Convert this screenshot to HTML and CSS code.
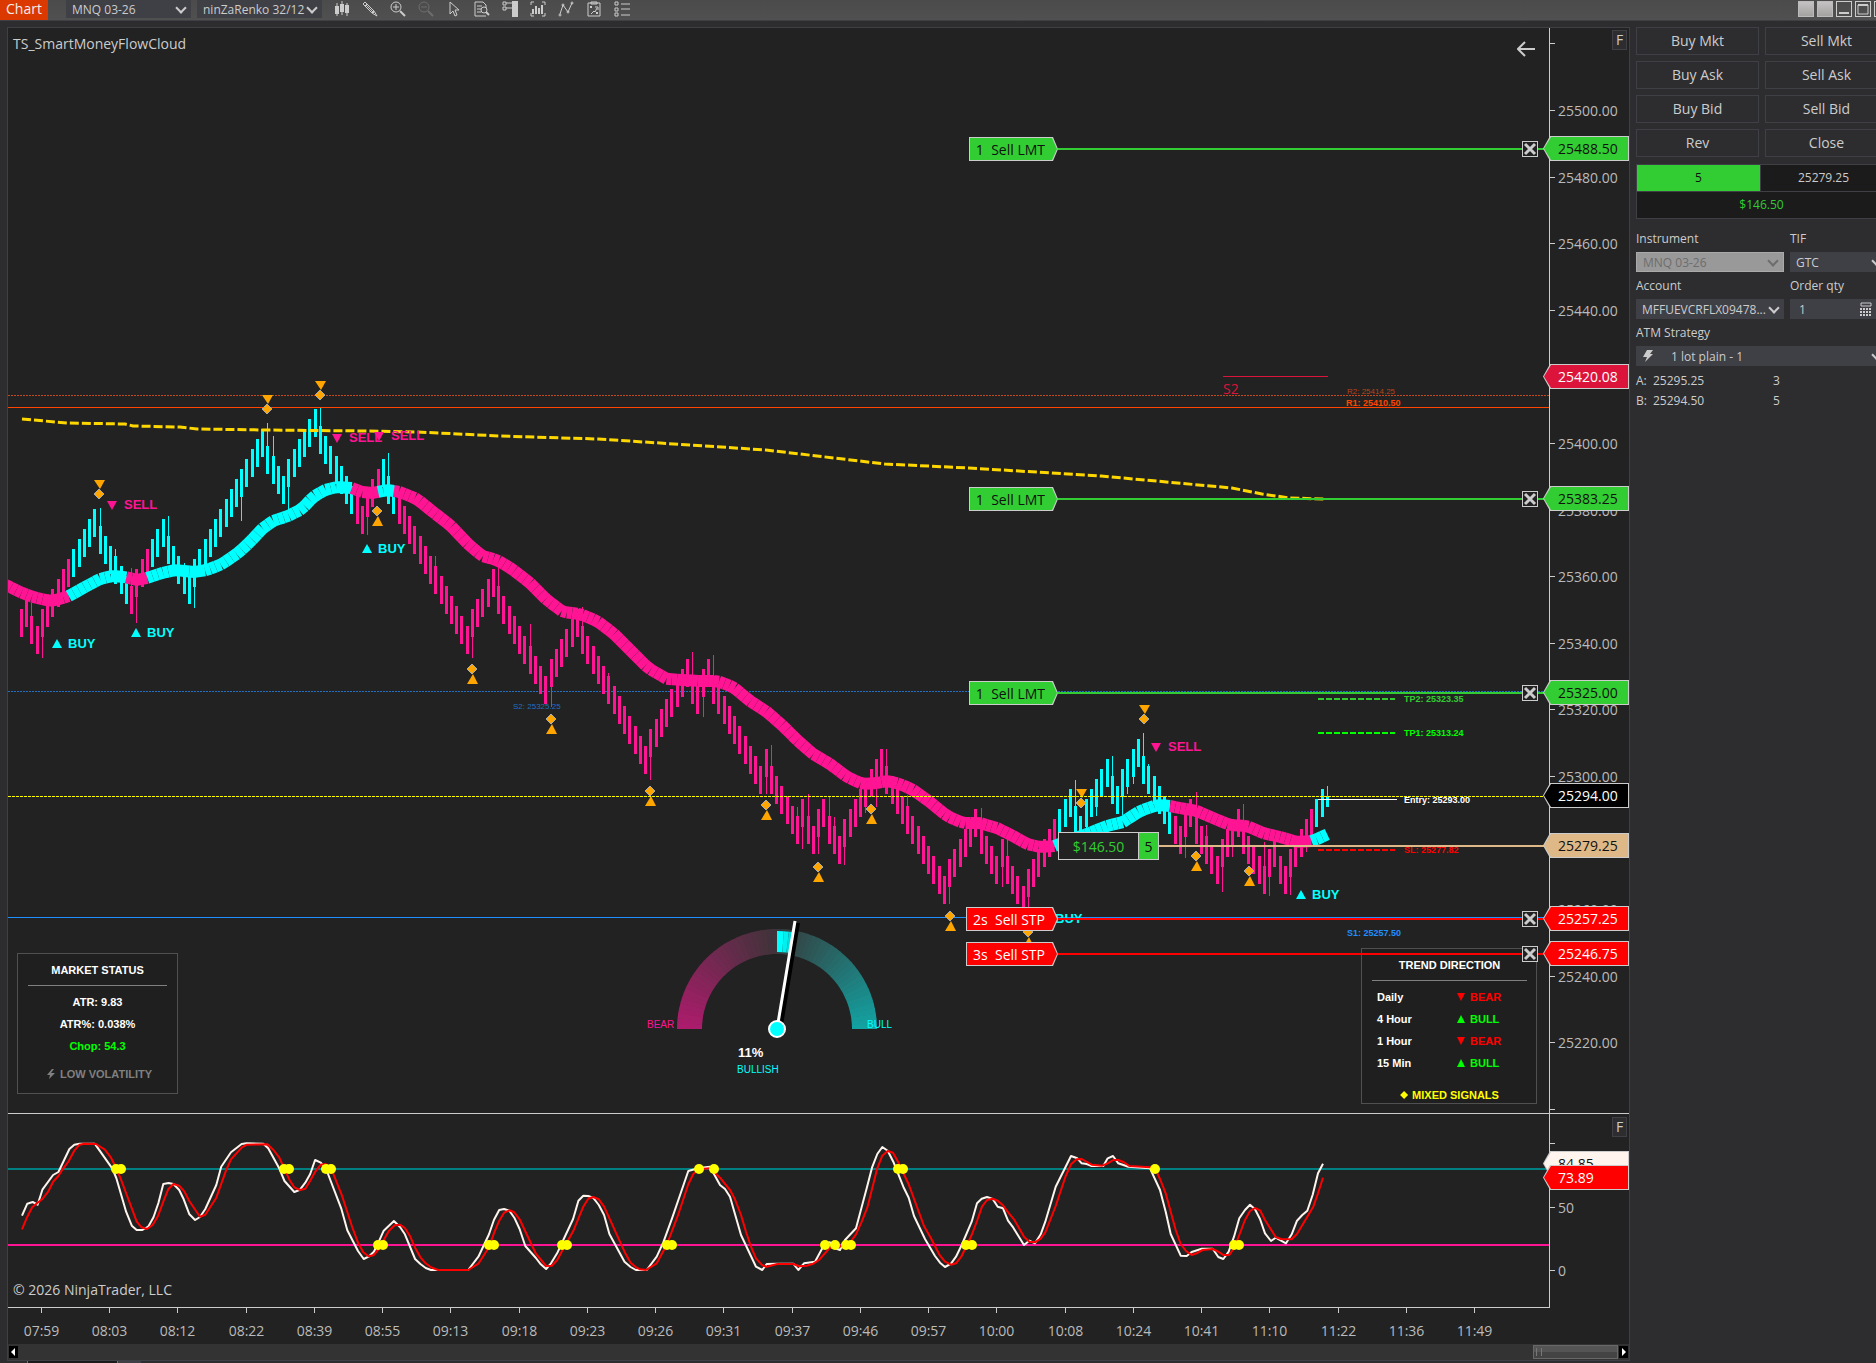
FILE: index.html
```html
<!DOCTYPE html>
<html lang="en">
<head>
  <meta charset="UTF-8">
  <meta name="viewport" content="width=device-width, initial-scale=1.0">
  <title>Chart - MNQ 03-26</title>
  <link rel="stylesheet" href="styles.css">
</head>
<body>
  <header class="toolbar">
    <h1 class="title">Chart</h1>
    <span class="select select-instrument">
      <select aria-label="Instrument"><option>MNQ 03-26</option></select>
    </span>
    <span class="select select-interval">
      <select aria-label="Interval"><option>ninZaRenko 32/12</option></select>
    </span>
    <nav class="tools">
      <button aria-label="Chart style"><svg viewBox="0 0 16 16"><path d="M3 2v13M8 0v14M13 2v13"/><path d="M1 5h4v8H1zM6 3h4v8H6zM11 4h4v8h-4z" class="solid"/></svg></button>
      <button aria-label="Drawing tools"><svg viewBox="0 0 16 16"><path d="M1 3l2-2 9 9 3 5-5-3zM3 5l2-2M4 4l8 8M10 12l2-2"/></svg></button>
      <button aria-label="Zoom in"><svg viewBox="0 0 16 16"><circle cx="6" cy="6" r="5"/><path d="M6 3v6M3 6h6"/><path d="M10 10l5 5" stroke-width="2"/></svg></button>
      <button aria-label="Zoom out" disabled><svg viewBox="0 0 16 16"><circle cx="6" cy="6" r="5"/><path d="M3 6h6"/><path d="M10 10l5 5" stroke-width="2"/></svg></button>
      <button aria-label="Cursor"><svg viewBox="0 0 16 16"><path d="M4 1v12l3-3 2 5 2-1-2-5h4z"/></svg></button>
      <button aria-label="Data box"><svg viewBox="0 0 16 16"><path d="M12 7V4l-3-3H1v14h11M3 5h5M3 8h4M3 11h4"/><circle cx="10" cy="9" r="3"/><path d="M12 11l3 3" stroke-width="2"/></svg></button>
      <button aria-label="Chart trader"><svg viewBox="0 0 16 16"><path d="M1 1h3v3H1zM1 6h3v3H1zM4 2h6M4 7h6" /><path d="M10 0h6v16h-6z" class="solid"/></svg></button>
      <button aria-label="Data series"><svg viewBox="0 0 16 16"><path d="M1 4V1h3M12 1h3v3M15 12v3h-3M4 15H1v-3"/><path d="M3 8v5M6 5v8M9 7v6M12 4v9" stroke-width="2"/></svg></button>
      <button aria-label="Indicators"><svg viewBox="0 0 16 16"><path d="M2 13L5 4l5 7 4-9"/><circle cx="2" cy="14" r="1"/><circle cx="5" cy="4" r="1"/><circle cx="10" cy="11" r="1"/><circle cx="14" cy="2" r="1"/></svg></button>
      <button aria-label="Strategies"><svg viewBox="0 0 16 16"><path d="M2 2h12v13H2zM5 1h6v2H5zM4 5l2 2M6 5L4 7M5 13l3-3 1 1 2-4M9 6h3v3M10 11l2 2M12 11l-2 2"/></svg></button>
      <button aria-label="Properties"><svg viewBox="0 0 16 16"><path d="M1 1h3v3H1zM1 7h3v3H1zM1 12h3v3H1zM7 3h9M7 8h9M7 14h9"/></svg></button>
    </nav>
    <div class="window-controls">
      <button class="swatch" aria-label="Instrument link"></button>
      <button class="swatch" aria-label="Interval link"></button>
      <button aria-label="Minimize"><svg viewBox="0 0 14 14"><path d="M2 11h10" stroke-width="2"/></svg></button>
      <button aria-label="Maximize"><svg viewBox="0 0 14 14"><path d="M2 3h10v9H2z"/><path d="M2 3h10" stroke-width="2"/></svg></button>
      <button aria-label="Close"></button>
    </div>
  </header>

  <main class="workspace">
    <section class="chart">
      <div class="plot price-plot">
        <svg class="canvas" id="priceCanvas"></svg>
        <p class="indicator-name">TS_SmartMoneyFlowCloud</p>
        <button class="back" aria-label="Return to latest bar"><svg viewBox="0 0 18 16"><path d="M8 1L1 8l7 7M1 8h17"/></svg></button>

        <section class="info market">
          <h2>MARKET STATUS</h2>
          <p>ATR: 9.83</p>
          <p>ATR%: 0.038%</p>
          <p class="chop">Chop: 54.3</p>
          <p class="volatility"><svg viewBox="0 0 8 10"><path d="M5 0L0 6h3L2 10l6-6H4l3-4z"/></svg> LOW VOLATILITY</p>
        </section>

        <section class="info trend">
          <h2>TREND DIRECTION</h2>
          <table>
            <tr><th>Daily</th><td class="bear">BEAR</td></tr>
            <tr><th>4 Hour</th><td class="bull">BULL</td></tr>
            <tr><th>1 Hour</th><td class="bear">BEAR</td></tr>
            <tr><th>15 Min</th><td class="bull">BULL</td></tr>
          </table>
          <p class="mixed">MIXED SIGNALS</p>
        </section>

        <div id="orders"></div>
      </div>

      <div class="axis price-axis" id="priceAxis">
        <button class="fixed-scale">F</button>
      </div>

      <div class="plot stoch-plot">
        <svg class="canvas" id="stochCanvas"></svg>
        <p class="copyright">© 2026 NinjaTrader, LLC</p>
      </div>
      <div class="axis stoch-axis" id="stochAxis">
        <button class="fixed-scale">F</button>
      </div>

      <div class="time-axis"><svg class="canvas" id="timeAxis"></svg></div>

      <div class="scrollbar">
        <button aria-label="Scroll left"><svg viewBox="0 0 7 12"><path d="M5 2v8L1 6z"/></svg></button>
        <div class="thumb"></div>
        <button aria-label="Scroll right"><svg viewBox="0 0 7 12"><path d="M2 2v8l4-4z"/></svg></button>
      </div>
    </section>

    <aside class="trader">
      <form class="trader-form">
        <div class="order-buttons">
          <button type="button">Buy Mkt</button>
          <button type="button">Sell Mkt</button>
          <button type="button">Buy Ask</button>
          <button type="button">Sell Ask</button>
          <button type="button">Buy Bid</button>
          <button type="button">Sell Bid</button>
          <button type="button">Rev</button>
          <button type="button">Close</button>
        </div>
        <div class="position">
          <span class="qty">5</span>
          <span>25279.25</span>
          <span class="pnl">$146.50</span>
        </div>
        <div class="fields">
          <label for="instrument">Instrument</label>
          <label for="tif">TIF</label>
          <span class="select disabled"><select id="instrument" disabled><option>MNQ 03-26</option></select></span>
          <span class="select"><select id="tif"><option>GTC</option></select></span>
          <label for="account">Account</label>
          <label for="qty">Order qty</label>
          <span class="select"><select id="account"><option>MFFUEVCRFLX09478...</option></select></span>
          <span class="qty-box">
            <input id="qty" type="text" value="1">
            <svg viewBox="0 0 12 14"><path d="M1 1h10v3H1z" class="frame"/><path d="M0 6h2v2H0zM3 6h2v2H3zM6 6h2v2H6zM9 6h2v2H9zM0 9h2v2H0zM3 9h2v2H3zM6 9h2v2H6zM9 9h2v2H9zM0 12h2v2H0zM3 12h2v2H3zM6 12h2v2H6zM9 12h2v2H9z"/></svg>
          </span>
          <label class="wide" for="atm">ATM Strategy</label>
          <span class="select wide atm">
            <svg viewBox="0 0 10 12"><path d="M4 0h6L7 4h3L2 12l2-5H0z"/></svg>
            <select id="atm"><option>1 lot plain - 1</option></select>
          </span>
        </div>
        <dl class="quotes">
          <dt>A:</dt><dd>25295.25</dd><dd>3</dd>
          <dt>B:</dt><dd>25294.50</dd><dd>5</dd>
        </dl>
      </form>
    </aside>
  </main>
  <footer class="tabs"><span></span><span></span></footer>

  <script src="chart.js"></script>
</body>
</html>
```
FILE: styles.css
```css
* {
  box-sizing: border-box;
}
body {
  margin: 0;
  min-height: 100vh;
  display: flex;
  flex-direction: column;
  background: #2d2d30;
  color: #ccc;
  font-family: "Open Sans", "Noto Sans", sans-serif;
  font-size: 12px;
  overflow-x: hidden;
}
h1, h2, p, dl, dd {
  margin: 0;
}
button, select, input {
  font: inherit;
  color: inherit;
  margin: 0;
  padding: 0;
  border: none;
  border-radius: 0;
  background: none;
}
button {
  cursor: pointer;
}
svg {
  display: block;
}

/* toolbar */
.toolbar {
  display: flex;
  align-items: flex-start;
  height: 21px;
  background: linear-gradient(#4b4b4b, #505050);
  border-bottom: 1px solid #3f3f46;
}
.title {
  width: 48px;
  height: 20px;
  background: #dc3900;
  color: #eee;
  font-size: 14px;
  font-weight: normal;
  line-height: 18px;
  text-align: center;
}
.select {
  position: relative;
  display: flex;
  align-items: center;
  height: 20px;
  background: #3f3f46;
}
.select select {
  appearance: none;
  flex: 1;
  min-width: 0;
  height: 100%;
  padding-left: 6px;
  outline: none;
}
.select::after {
  content: "";
  position: absolute;
  right: 6px;
  top: 5px;
  width: 6px;
  height: 6px;
  border: solid #ccc;
  border-width: 0 2px 2px 0;
  transform: rotate(45deg);
  pointer-events: none;
}
.toolbar .select {
  height: 18px;
}
.toolbar .select::after {
  top: 4px;
}
.select-instrument {
  width: 125px;
  margin-left: 18px;
}
.select-interval {
  width: 125px;
  margin-left: 6px;
}
.tools {
  display: flex;
  gap: 12px;
  margin-left: 12px;
}
.tools svg {
  width: 16px;
  height: 16px;
  margin-top: 1px;
  fill: none;
  stroke: #ccc;
}
.tools svg .solid {
  fill: #ccc;
  stroke: none;
}
.tools button:disabled {
  opacity: 0.25;
}
.window-controls {
  display: flex;
  gap: 3px;
  width: 78px;
  margin-left: auto;
  margin-top: 1px;
  overflow: hidden;
}
.window-controls button {
  flex: 0 0 16px;
  height: 16px;
  border: 1px solid #ccc;
}
.window-controls svg {
  fill: none;
  stroke: #ccc;
}
.window-controls .swatch {
  background: linear-gradient(#c4c2c2, #a4a1a1);
  border-color: #bbb;
}

/* chart area */
.workspace {
  flex: 1;
  display: grid;
  grid-template-columns: minmax(0, 1fr) 246px;
  padding-top: 6px;
}
.chart {
  display: grid;
  grid-template-columns: minmax(0, 1fr) 80px;
  grid-template-rows: minmax(1085px, 1fr) 194px 37px 16px;
  margin-left: 7px;
  border: 1px solid #3f3f46;
  background: #222;
}
.plot, .axis, .time-axis {
  position: relative;
}
.plot {
  overflow: hidden;
}
.canvas {
  position: absolute;
  width: 100%;
  height: 100%;
}
.stoch-plot, .stoch-axis {
  border-top: 1px solid #ccc;
}
.axis {
  border-left: 1px solid #ccc;
  font-size: 14px;
}
.indicator-name, .copyright {
  position: absolute;
  left: 5px;
  font-size: 14px;
  line-height: 20px;
}
.indicator-name {
  top: 6px;
}
.copyright {
  bottom: 7px;
}
.back {
  position: absolute;
  top: 13px;
  right: 14px;
}
.back svg {
  width: 18px;
  height: 16px;
  fill: none;
  stroke: #ccc;
  stroke-width: 2;
}
.fixed-scale {
  position: absolute;
  top: 2px;
  right: 2px;
  width: 15px;
  height: 20px;
  border: 1px solid #3f3f46;
  background: #2d2d30;
  line-height: 18px;
}
.stoch-axis .fixed-scale {
  top: 3px;
}
.tick {
  position: absolute;
  left: 0;
  display: flex;
  align-items: center;
  gap: 3px;
  height: 20px;
  margin-top: -10px;
  color: #bbb;
}
.tick::before {
  content: "";
  width: 5px;
  height: 1px;
  background: #ccc;
}

/* price markers on the axis */
.marker {
  position: absolute;
  z-index: 3;
  left: -7px;
  right: 0;
  height: 25px;
  margin-top: -12px;
  padding-left: 15px;
  background: #ccc;
  clip-path: polygon(7px 0, 100% 0, 100% 100%, 7px 100%, 0 50%);
  line-height: 25px;
}
.marker::before, .tag::before {
  content: "";
  position: absolute;
  z-index: -1;
  inset: 1px;
  background: var(--fill);
  clip-path: inherit;
}
.green {
  --fill: #32cd32;
  color: #111;
}
.red {
  --fill: #f00;
  color: #fff;
}
.crimson {
  --fill: #dc143c;
  color: #fff;
}
.black {
  --fill: #000;
  color: #fff;
}
.tan {
  --fill: #deb887;
  color: #111;
}
.seashell {
  --fill: #fff5ee;
  color: #111;
}

/* working orders */
.order {
  position: absolute;
  z-index: 2;
  left: 958px;
  right: 0;
  display: flex;
  align-items: center;
  height: 26px;
  margin-top: -12px;
  font-size: 14px;
}
.order::after {
  content: "";
  width: 11px;
  height: 2px;
  background: var(--fill);
}
.tag {
  position: relative;
  z-index: 0;
  height: 24px;
  margin-left: auto;
  padding: 0 13px 0 7px;
  background: #ccc;
  clip-path: polygon(0 0, calc(100% - 5px) 0, 100% 50%, calc(100% - 5px) 100%, 0 100%);
  line-height: 25px;
  white-space: pre;
}
.tag-slot {
  display: flex;
  width: 92px;
}
.line {
  flex: 1;
  height: 2px;
  background: var(--fill);
}
.cancel {
  width: 16px;
  height: 16px;
  border: 1px solid #ccc;
  background: #222;
}
.cancel svg {
  stroke: #ccc;
  stroke-width: 3;
}
.open-position {
  left: 1050px;
  height: 28px;
  margin-top: -13px;
}
.open-position .profit, .open-position .size {
  height: 28px;
  border: 1px solid #ccc;
  line-height: 27px;
  text-align: center;
}
.open-position .profit {
  width: 81px;
  background: #222;
  color: #32cd32;
}
.open-position .size {
  width: 21px;
  margin-left: -1px;
  background: #32cd32;
}

/* info panels */
.info {
  position: absolute;
  border: 1px solid #505050;
  background: #1f1f1f;
  color: #fff;
  font: bold 11px/22px "Liberation Sans", Arial, sans-serif;
  text-align: center;
}
.info h2 {
  padding-bottom: 7px;
  border-bottom: 1px solid #808080;
  font-size: 11px;
  line-height: 16px;
}
.market {
  left: 9px;
  bottom: 19px;
  width: 161px;
  height: 141px;
  padding: 8px 10px;
}
.market h2 {
  margin-bottom: 5px;
}
.chop {
  color: #0f0;
}
.volatility {
  display: flex;
  justify-content: center;
  align-items: center;
  gap: 5px;
  margin-top: 6px;
  padding-left: 4px;
  color: #808080;
}
.volatility svg {
  width: 8px;
  height: 10px;
  fill: #808080;
}
.trend {
  right: 12px;
  bottom: 9px;
  width: 176px;
  height: 156px;
  padding: 8px 9px 0 10px;
}
.trend table {
  width: 100%;
  margin-top: 5px;
  border-collapse: collapse;
  text-align: left;
}
.trend th, .trend td {
  height: 22px;
  padding: 0 0 0 5px;
}
.trend td {
  width: 75px;
}
.bear::before, .bull::before {
  content: "";
  display: inline-block;
  width: 8px;
  height: 8px;
  margin-right: 5px;
  background: currentColor;
}
.bear {
  color: #f00;
}
.bear::before {
  clip-path: polygon(0 0, 100% 0, 50% 100%);
}
.bull {
  color: #0f0;
}
.bull::before {
  clip-path: polygon(50% 0, 100% 100%, 0 100%);
}
.mixed {
  margin-top: 10px;
  color: #ff0;
}
.mixed::before {
  content: "";
  display: inline-block;
  width: 8px;
  height: 8px;
  margin-right: 4px;
  background: currentColor;
  clip-path: polygon(50% 0, 100% 50%, 50% 100%, 0 50%);
}

/* text drawn in the chart */
.canvas text {
  font-family: "Liberation Sans", Arial, sans-serif;
  font-size: 9px;
  font-weight: bold;
}
.canvas .signal, .canvas .percent {
  font-size: 13px;
}
.canvas .plain {
  font-size: 10px;
  font-weight: normal;
}
.canvas .level-small {
  font-size: 8px;
  font-weight: normal;
}
.canvas .level-big, #timeAxis text {
  font-family: "Open Sans", "Noto Sans", sans-serif;
  font-size: 14px;
  font-weight: normal;
}
#timeAxis text {
  text-anchor: middle;
}

.scrollbar {
  grid-column: 1 / -1;
  display: flex;
  align-items: center;
  padding: 0 1px;
  background: #333;
}
.time-axis {
  grid-column: 1 / -1;
}
.time-axis::before {
  content: "";
  position: absolute;
  left: 0;
  right: 79px;
  height: 1px;
  background: #ccc;
}
.scrollbar button {
  width: 9px;
  height: 12px;
  background: #000;
}
.scrollbar svg {
  width: 7px;
  height: 12px;
  margin: auto;
  fill: #fff;
}
.thumb {
  width: 85px;
  height: 14px;
  margin-left: auto;
  margin-right: 1px;
  border: 1px solid #686868;
  background: linear-gradient(#555 50%, #444 50%);
}
.thumb::before {
  content: "";
  display: block;
  width: 4px;
  height: 8px;
  margin: 2px;
  border: solid #777;
  border-width: 0 1px;
}

/* chart trader */
.trader {
  padding-left: 6px;
  overflow: hidden;
}
.trader-form {
  width: 251px;
}
.order-buttons {
  display: grid;
  grid-template-columns: 123px 123px;
  gap: 6px;
}
.order-buttons button {
  height: 28px;
  border: 1px solid #3f3f46;
  font-size: 14px;
  line-height: 26px;
}
.position {
  display: grid;
  grid-template-columns: 123px 1fr;
  gap: 1px;
  margin-top: 7px;
  border: 1px solid #3f3f46;
  background: #3f3f46;
}
.position span {
  height: 26px;
  background: #1b1b1c;
  line-height: 26px;
  text-align: center;
}
.position .qty {
  background: #32cd32;
  color: #111;
}
.position .pnl {
  grid-column: 1 / -1;
  color: #32cd32;
}
.fields {
  display: grid;
  grid-template-columns: 148px 1fr;
  column-gap: 6px;
  margin-top: 6px;
}
.fields label {
  height: 27px;
  padding-top: 5px;
  line-height: 17px;
}
.fields .select {
  height: 20px;
}
.wide {
  grid-column: 1 / -1;
}
.fields .disabled {
  background: #999;
  border: 1px solid #aaa;
  color: #6d6d6d;
}
.disabled select:disabled {
  color: #6d6d6d;
  opacity: 1;
}
.fields .disabled::after {
  top: 4px;
  border-color: #6d6d6d;
}
.qty-box {
  display: flex;
  align-items: center;
  height: 20px;
  background: #3f3f46;
}
.qty-box input {
  width: 70px;
  padding-left: 9px;
  outline: none;
}
.qty-box svg {
  width: 12px;
  height: 14px;
  fill: #ccc;
}
.qty-box .frame {
  fill: none;
  stroke: #ccc;
}
.atm svg {
  width: 10px;
  height: 12px;
  margin-left: 7px;
  fill: #ccc;
}
.atm select {
  padding-left: 18px;
}
.quotes {
  display: grid;
  grid-template-columns: 17px 120px 1fr;
  margin-top: 5px;
  line-height: 20px;
}

.tabs {
  display: flex;
  height: 2px;
  padding-left: 27px;
}
.tabs span {
  width: 91px;
  background: #1b1b1c;
  border: solid #1c86ee;
  border-width: 0 1px;
}
.tabs span + span {
  width: 23px;
  border: none;
  background: #3f3f46;
}
```
FILE: chart.js
```js
const LEFT = 8;
const TOP = 28;
const FIRST_X = 21.5;
const PITCH = 5.244;
const CYAN = '#00ffff';
const PINK = '#ff1493';

function line(x1, y1, x2, y2, color, width = 1, dash = '') {
  return `<line x1="${x1}" y1="${y1}" x2="${x2}" y2="${y2}" stroke="${color}" stroke-width="${width}" stroke-dasharray="${dash}"/>`;
}

function text(x, y, label, color, cls = '') {
  return `<text x="${x}" y="${y}" fill="${color}" class="${cls}">${label}</text>`;
}

function priceY(price) {
  return 82 + (25500 - price) * 3.33;
}

// Cloud and bars share the trend colour of their index
const bullRanges = [[10, 20], [25, 63], [69, 71], [198, 219], [247, 249]];
function trendColor(i) {
  return bullRanges.some(([a, b]) => i >= a && i <= b) ? CYAN : PINK;
}

// Lengths of the alternating up / down renko runs, starting with an up run
const runs = [2, 2, 11, 7, 6, 5, 14, 4, 6, 9, 4, 16, 5, 10, 6, 13, 8, 2, 2, 10, 1, 6, 1, 2, 2, 3, 8,
  12, 6, 4, 1, 4, 9, 2, 5, 2, 4, 8, 2, 5, 4, 5, 2, 2, 7];

// Far end of the wick for the bars that have one
const wicks = {
  2: 603, 4: 658, 15: 508, 18: 549, 21: 568, 22: 623, 28: 516, 31: 563, 33: 608, 42: 521, 47: 423,
  48: 436, 51: 510, 57: 408, 66: 535, 70: 453, 79: 556, 86: 658, 91: 566, 97: 624, 101: 707, 107: 607,
  112: 673, 120: 780, 128: 652, 130: 717, 132: 655, 142: 794, 143: 745, 148: 807, 149: 849, 150: 794,
  152: 854, 154: 797, 155: 817, 157: 865, 161: 813, 163: 807, 165: 749, 169: 795, 177: 904, 183: 808,
  187: 887, 188: 839, 192: 907, 201: 780, 203: 840, 205: 816, 208: 756, 210: 815, 211: 794, 212: 784,
  214: 733, 215: 764, 222: 858, 224: 792, 226: 825, 229: 892, 231: 857, 233: 804, 237: 842, 238: 896,
  242: 895, 245: 852
};

function drawBars() {
  let out = '';
  let y = 619;
  let i = 0;
  runs.forEach((count, r) => {
    const step = r % 2 === 0 ? -10 : 10;
    for (let n = 0; n < count; n++) {
      y += n === 0 && r > 0 ? Math.sign(step) * 17 : step;
      const x = Math.round(FIRST_X + i * PITCH - 0.5);
      const color = trendColor(i);
      out += `<rect x="${x - 1}" y="${y}" width="3" height="28" fill="${color}"/>`;
      if (wicks[i]) {
        out += line(x + 0.5, y + 14, x + 0.5, wicks[i], color);
      }
      i++;
    }
  });
  return out + `<rect x="1326" y="796" width="3" height="11" fill="${CYAN}"/>` + line(1327.5, 786, 1327.5, 800, CYAN);
}

const cloud = [[8, 586], [20, 592], [33, 597], [50, 601], [60, 599], [69, 596], [83, 588], [100, 579],
  [112, 576], [125, 577], [137, 580], [147, 578], [162, 573], [175, 570], [194, 572], [207, 570],
  [222, 564], [238, 553], [250, 542], [263, 528], [273, 521], [288, 516], [302, 509], [313, 497],
  [325, 490], [337, 487], [352, 488], [362, 492], [373, 493], [387, 490], [400, 492], [417, 499],
  [433, 512], [450, 525], [467, 543], [482, 556], [497, 560], [512, 569], [530, 583], [547, 600],
  [563, 612], [580, 614], [597, 621], [613, 633], [633, 653], [648, 668], [667, 679], [683, 680],
  [700, 681], [717, 681], [733, 687], [750, 701], [767, 712], [783, 726], [797, 740], [813, 754],
  [830, 764], [847, 777], [863, 784], [877, 783], [888, 781], [900, 784], [913, 790], [930, 802],
  [947, 816], [963, 823], [980, 823], [997, 828], [1013, 836], [1027, 844], [1040, 847], [1055, 846],
  [1062, 843], [1087, 834], [1107, 826], [1123, 822], [1140, 811], [1157, 805], [1170, 806],
  [1180, 808], [1197, 811], [1213, 818], [1230, 825], [1247, 826], [1263, 833], [1280, 837],
  [1297, 842], [1313, 841], [1328, 834]];

function interpolate(points, x) {
  let k = 0;
  while (k < points.length - 2 && points[k + 1][0] < x) k++;
  const [x1, y1] = points[k];
  const [x2, y2] = points[k + 1];
  return y1 + (y2 - y1) * (x - x1) / (x2 - x1);
}

function drawCloud() {
  let out = '';
  for (let i = -2; i <= 249; i++) {
    const x2 = FIRST_X + i * PITCH;
    const x1 = x2 - PITCH;
    out += line(x1, interpolate(cloud, x1), x2, interpolate(cloud, x2), trendColor(i), 12);
  }
  return out;
}

function diamond(x, y) {
  return `<path d="M${x} ${y - 5}l5 5l-5 5l-5-5z" fill="orange" stroke="#aaa"/>`;
}

function topMarker(x, y) {
  return `<path d="M${x - 5} ${y - 14}h11l-5 9z" fill="orange"/>` + diamond(x, y);
}

function bottomMarker(x, y) {
  return `<path d="M${x - 5} ${y + 15}h11l-5-10z" fill="orange"/>` + diamond(x, y);
}

function buy(x, y) {
  return `<path d="M${x - 16} ${y}h10l-5-9z" fill="${CYAN}"/>` + text(x, y, 'BUY', CYAN, 'signal');
}

function sell(x, y) {
  return `<path d="M${x - 17} ${y - 8}h10l-5 9z" fill="${PINK}"/>` + text(x, y, 'SELL', PINK, 'signal');
}

function drawGauge(cx, cy) {
  const point = (r, deg) => {
    const a = deg * Math.PI / 180;
    return `${(cx - r * Math.cos(a)).toFixed(1)} ${(cy - r * Math.sin(a)).toFixed(1)}`;
  };
  const slice = (a, b, inner, outer, color) =>
    `<path d="M${point(outer, a)}L${point(outer, b)}L${point(inner, b)}L${point(inner, a)}z" fill="${color}"/>`;
  const mix = (a, b, t) => a.map((v, k) => Math.round(v + (b[k] - v) * t));
  let out = '';
  for (let deg = 0; deg < 180; deg += 3) {
    const rgb = deg < 90 ? mix([172, 28, 108], [60, 52, 55], deg / 90) : mix([55, 60, 60], [18, 165, 165], (deg - 90) / 90);
    out += slice(deg, Math.min(deg + 3.4, 180), 75, 100, `rgb(${rgb})`);
  }
  out += slice(90, 94, 77, 98, CYAN) + slice(94, 97, 77, 98, '#00f0f0') + slice(97, 100, 77, 98, '#00dcdc');
  out += line(cx + 3, cy + 2, cx + 21, cy - 106, '#000', 4);
  out += line(cx, cy, cx + 18, cy - 108, '#fff', 3);
  out += `<circle cx="${cx}" cy="${cy}" r="8" fill="${CYAN}" stroke="#fff" stroke-width="2"/>`;
  out += text(647, 1028, 'BEAR', PINK, 'plain') + text(867, 1028, 'BULL', CYAN, 'plain');
  out += text(738, 1057, '11%', '#fff', 'percent') + text(737, 1073, 'BULLISH', CYAN, 'plain');
  return out;
}

function drawPrice() {
  let out = '';
  out += line(0, 367.5, '100%', 367.5, '#c04a1c', 1, '2 1');
  out += line(0, 379.5, '100%', 379.5, '#ff4500');
  out += line(0, 663.5, '100%', 663.5, '#1f70c0', 1, '2 1');
  out += line(0, 889.5, '100%', 889.5, '#1e90ff');
  out += `<g transform="translate(${-LEFT} ${-TOP})">`;
  out += drawBars() + drawCloud();
  out += '<polyline points="22,419 67,423 125,424 133,426 180,427 197,429 267,430 367,431 417,432 500,436 598,439 690,445 766,450 885,464 969,468 1101,476 1232,488 1262,494 1290,498 1324,499" fill="none" stroke="#ffd700" stroke-width="3" stroke-dasharray="9 3"/>';
  [[267, 409], [320, 395], [99, 494], [1144, 719], [1081, 803]].forEach(([x, y]) => out += topMarker(x, y));
  [[377, 511], [472, 669], [551, 719], [650, 791], [766, 805], [818, 867], [871, 809], [950, 916],
    [1028, 932], [1196, 856], [1249, 871]].forEach(([x, y]) => out += bottomMarker(x, y));
  [[68, 648], [147, 637], [378, 553], [1312, 899], [1055, 923]].forEach(([x, y]) => out += buy(x, y));
  [[124, 509], [349, 442], [391, 440], [1168, 751]].forEach(([x, y]) => out += sell(x, y));
  out += text(513, 709, 'S2: 25325.25', '#1f70c0', 'level-small');
  out += line(1223, 376.5, 1328, 376.5, '#dc143c') + text(1223, 394, 'S2', '#dc143c', 'level-big');
  out += text(1347, 394, 'R2: 25414.25', '#b5451a', 'level-small') + text(1346, 406, 'R1: 25410.50', '#ff4500');
  out += text(1347, 936, 'S1: 25257.50', '#1e90ff');
  out += line(1318, 699, 1395, 699, '#32cd32', 2, '6 2') + text(1404, 702, 'TP2: 25323.35', '#32cd32');
  out += line(1318, 733, 1395, 733, '#0f0', 2, '6 2') + text(1404, 736, 'TP1: 25313.24', '#0f0');
  out += line(1318, 850, 1395, 850, '#f00', 2, '6 2') + text(1404, 853, 'SL: 25277.82', '#f00');
  out += drawGauge(777, 1029);
  out += '</g>';
  out += line(0, 768.5, '100%', 768.5, '#ffff00', 1, '3 1');
  out += `<g transform="translate(${-LEFT} ${-TOP})">`;
  out += line(1318, 799.5, 1397, 799.5, '#fff') + text(1404, 803, 'Entry: 25293.00', '#fff') + '</g>';
  document.getElementById('priceCanvas').innerHTML = out;
}

function drawOrders() {
  const cross = '<svg viewBox="0 0 14 14"><path d="M2 2l10 10M12 2L2 12"/></svg>';
  const orders = [
    ['1', 'Sell LMT', 25488.5, 'green'],
    ['1', 'Sell LMT', 25383.25, 'green'],
    ['1', 'Sell LMT', 25325, 'green'],
    ['2s', 'Sell STP', 25257.25, 'red'],
    ['3s', 'Sell STP', 25246.75, 'red']
  ];
  let out = '';
  orders.forEach(([qty, name, price, cls]) => {
    out += `<div class="order ${cls}" style="top: ${Math.floor(priceY(price))}px">
      <span class="tag-slot"><span class="tag">${qty}  ${name}</span></span>
      <span class="line"></span>
      <button class="cancel" aria-label="Cancel order">${cross}</button>
    </div>`;
  });
  out += `<div class="order open-position tan" style="top: ${Math.floor(priceY(25279.25))}px">
    <span class="profit">$146.50</span><span class="size">5</span><span class="line"></span>
  </div>`;
  document.getElementById('orders').innerHTML = out;
}

function drawAxes() {
  let out = '';
  for (let price = 25520; price >= 25200; price -= 20) {
    const label = price === 25520 || price === 25200 || price === 25420 ? '' : price.toFixed(2);
    out += `<span class="tick" style="top: ${Math.round(priceY(price))}px">${label}</span>`;
  }
  [[25488.5, 'green'], [25420.08, 'crimson'], [25383.25, 'green'], [25325, 'green'], [25294, 'black'],
    [25279.25, 'tan'], [25257.25, 'red'], [25246.75, 'red']].forEach(([price, cls]) => {
    out += `<span class="marker ${cls}" style="top: ${Math.floor(priceY(price))}px">${price.toFixed(2)}</span>`;
  });
  document.getElementById('priceAxis').insertAdjacentHTML('beforeend', out);

  out = '';
  [[100, ''], [50, '50'], [0, '0']].forEach(([value, label]) => {
    out += `<span class="tick" style="top: ${Math.round(156 - value * 1.27)}px">${label}</span>`;
  });
  out += '<span class="marker seashell" style="top: 49px">84.85</span>';
  out += '<span class="marker red" style="top: 63px">73.89</span>';
  document.getElementById('stochAxis').insertAdjacentHTML('beforeend', out);

  const times = ['07:59', '08:03', '08:12', '08:22', '08:39', '08:55', '09:13', '09:18', '09:23', '09:26', '09:31',
    '09:37', '09:46', '09:57', '10:00', '10:08', '10:24', '10:41', '11:10', '11:22', '11:36', '11:49'];
  out = '';
  times.forEach((time, i) => {
    const x = Math.round(33 + i * 68.24) + 0.5;
    out += line(x, 1, x, 6, '#ccc') + text(x, 29, time, '#bbb');
  });
  document.getElementById('timeAxis').innerHTML = out;
}

// Stochastic samples: [x origin, samples per pixel, "x,y ..."]
const fast = [
  [0, 2.45, '54,347 67,311 80,306 92,314 104,269 130,225 143,216 170,147 182,134 195,131 232,131 275,205 285,234 309,335 323,377 335,390 349,390 363,380 376,352 388,309 400,252 413,249 425,252 439,270 450,298 464,343 478,360 490,351 503,327 530,255 542,200 566,157 592,132 604,130 645,131 657,145 684,205 697,243 721,276 735,269 748,248 760,222 772,180 786,188 800,210 836,325 851,391 877,453 891,477 903,470 916,455 928,425 940,392 965,363 980,381 992,403 1017,477 1030,492 1043,504 1056,510 1147,510 1172,470 1198,403 1210,360 1223,330 1235,327 1248,332 1260,353 1273,387 1287,438 1313,474 1325,493 1338,507 1350,490 1365,460 1380,420 1404,357 1417,302 1429,287 1441,288 1453,293 1467,315 1480,345 1493,402 1530,485 1545,501 1558,510'],
  [640, 3, '0,510 20,510 50,470 70,427 97,353 145,213 177,204 210,200 240,255 255,267 270,290 303,405 348,500 367,510 380,492 410,491 460,491 475,510 492,490 525,485 555,430 570,427 585,445 600,450 615,420 648,385 680,265 696,203 712,162 727,141 743,152 760,185 790,260 806,293 822,348 855,417 885,468 900,488 915,501 933,491 948,470 965,435 995,365 1011,310 1025,296 1041,291 1058,297 1073,320 1089,325 1104,362 1120,383 1152,435 1168,422 1185,430 1202,403 1216,365 1247,260 1293,168 1312,175 1325,190 1340,192 1355,198 1390,198 1403,175 1419,168 1435,190 1465,200 1530,205'],
  [1130, 3, '60,205 90,270 107,335 122,402 152,467 170,468 185,456 215,446 248,446 265,471 280,477 296,455 312,410 328,355 345,330 360,314 375,328 390,357 405,400 423,423 437,413 468,430 485,403 501,362 517,345 532,332 548,284 564,220 579,191']
];
const slow = [
  [0, 2.45, '54,388 67,350 79,322 92,308 104,297 118,275 130,245 143,228 155,205 168,184 182,152 195,134 207,131 235,132 257,149 272,173 285,205 297,240 323,325 335,365 347,382 360,387 374,375 387,348 400,305 412,268 425,252 439,257 452,275 464,304 490,350 503,344 530,293 554,211 566,178 592,143 605,134 655,133 670,150 684,172 697,207 709,239 721,262 735,270 748,266 760,242 773,214 786,194 798,192 812,207 838,287 863,381 877,428 890,457 903,469 915,466 928,447 940,420 953,392 967,376 980,374 992,384 1004,407 1017,443 1030,472 1043,490 1056,502 1073,510 1147,510 1172,491 1198,442 1210,400 1223,362 1235,338 1248,331 1260,337 1273,358 1313,461 1338,498 1352,497 1365,481 1380,446 1404,394 1429,320 1441,296 1453,291 1467,298 1480,320 1530,455 1545,488 1560,503'],
  [640, 3, '0,508 18,510 50,490 80,435 115,343 145,253 160,222 177,208 210,205 240,233 270,270 285,298 303,345 318,395 333,440 348,475 367,496 380,500 412,492 460,492 478,499 500,497 520,491 537,480 570,443 600,440 632,425 648,403 664,368 682,323 712,205 727,167 743,153 759,158 774,185 806,253 852,378 872,413 900,467 915,485 933,494 948,490 964,470 995,405 1011,363 1026,320 1041,300 1058,296 1073,302 1089,316 1105,338 1122,358 1152,410 1168,425 1185,427 1202,416 1216,397 1247,318 1277,228 1293,193 1310,178 1325,177 1355,194 1387,197 1403,190 1420,180 1435,180 1452,187 1468,198 1530,202'],
  [1130, 3, '60,202 75,205 90,237 107,280 122,335 137,390 152,432 168,453 185,465 200,460 218,450 248,447 265,455 280,465 298,465 312,445 328,405 345,360 360,333 375,324 390,331 405,360 437,411 453,417 485,418 501,402 550,320 564,280 579,233']
];

function curve(parts, color) {
  const points = parts.flatMap(([origin, scale, samples]) => samples.split(' ').map(s => {
    const [x, y] = s.split(',');
    return `${(origin + x / scale - LEFT).toFixed(1)},${(y / 3 - 14).toFixed(1)}`;
  }));
  return `<polyline points="${points.join(' ')}" fill="none" stroke="${color}" stroke-width="2" stroke-linejoin="round"/>`;
}

function drawStoch() {
  let out = line(0, 55, '100%', 55, '#008080', 2) + line(0, 131, '100%', 131, PINK, 2);
  out += curve(fast, '#fff5ee') + curve(slow, '#f00');
  [116, 121, 284, 289, 326, 331, 699, 714, 898, 903, 1155].forEach(x => {
    out += `<circle cx="${x - LEFT}" cy="55" r="5" fill="#ff0"/>`;
  });
  [378, 383, 489, 494, 562, 567, 667, 672, 825, 835, 846, 851, 966, 972, 1234, 1239].forEach(x => {
    out += `<circle cx="${x - LEFT}" cy="131" r="5" fill="#ff0"/>`;
  });
  document.getElementById('stochCanvas').innerHTML = out;
}

drawPrice();
drawOrders();
drawAxes();
drawStoch();
```
